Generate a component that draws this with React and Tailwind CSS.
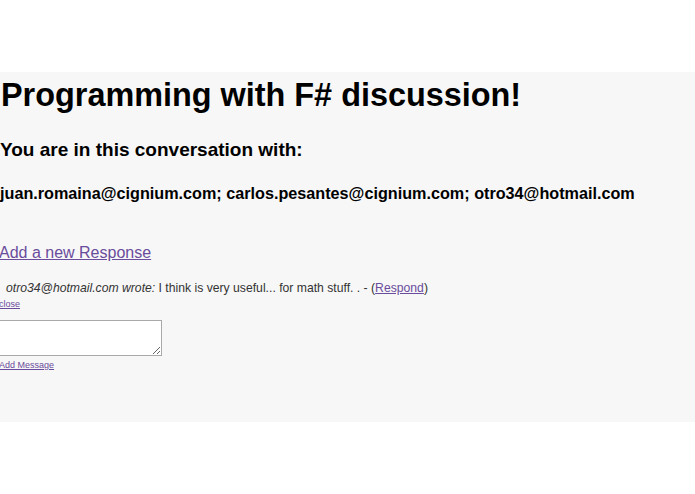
import React from "react";

export default function App() {
  return (
    <div className="w-[695px] h-[494px] bg-white font-['Liberation_Sans',Arial,sans-serif] overflow-hidden">
      <div className="h-[72px]" />
      <div className="bg-[#f7f7f7] h-[350px] pt-[5px] flex flex-col items-start">
        <h1 className="text-[32.4px] leading-[37px] font-bold text-black ml-[1px]">
          Programming with F# discussion!
        </h1>
        <h2 className="text-[19px] leading-[22px] font-bold text-black mt-[25px]">
          You are in this conversation with:
        </h2>
        <p className="text-[16.2px] leading-[19px] font-bold text-black mt-[23px]">
          juan.romaina@cignium.com; carlos.pesantes@cignium.com; otro34@hotmail.com
        </p>
        <a href="#" className="text-[16px] leading-[19px] text-[#6a4c9c] underline mt-[40px] -ml-[1px]">
          Add a new Response
        </a>
        <div className="text-[12.2px] leading-[14px] text-[#333] mt-[19px] ml-[6px]">
          <i>otro34@hotmail.com wrote:</i> I think is very useful... for math stuff. . - (
          <a href="#" className="text-[#6a4c9c] underline">Respond</a>)
        </div>
        <a href="#" className="text-[9px] leading-[11px] text-[#6a4c9c] underline mt-[4px] -ml-[1px]">
          close
        </a>
        <textarea className="mt-[10px] -ml-[2px] w-[164px] h-[36px] bg-white border border-[#a9a9a9] resize-y" />
        <a href="#" className="text-[9px] leading-[11px] text-[#6a4c9c] underline mt-[4px] -ml-[1px]">
          Add Message
        </a>
      </div>
    </div>
  );
}
